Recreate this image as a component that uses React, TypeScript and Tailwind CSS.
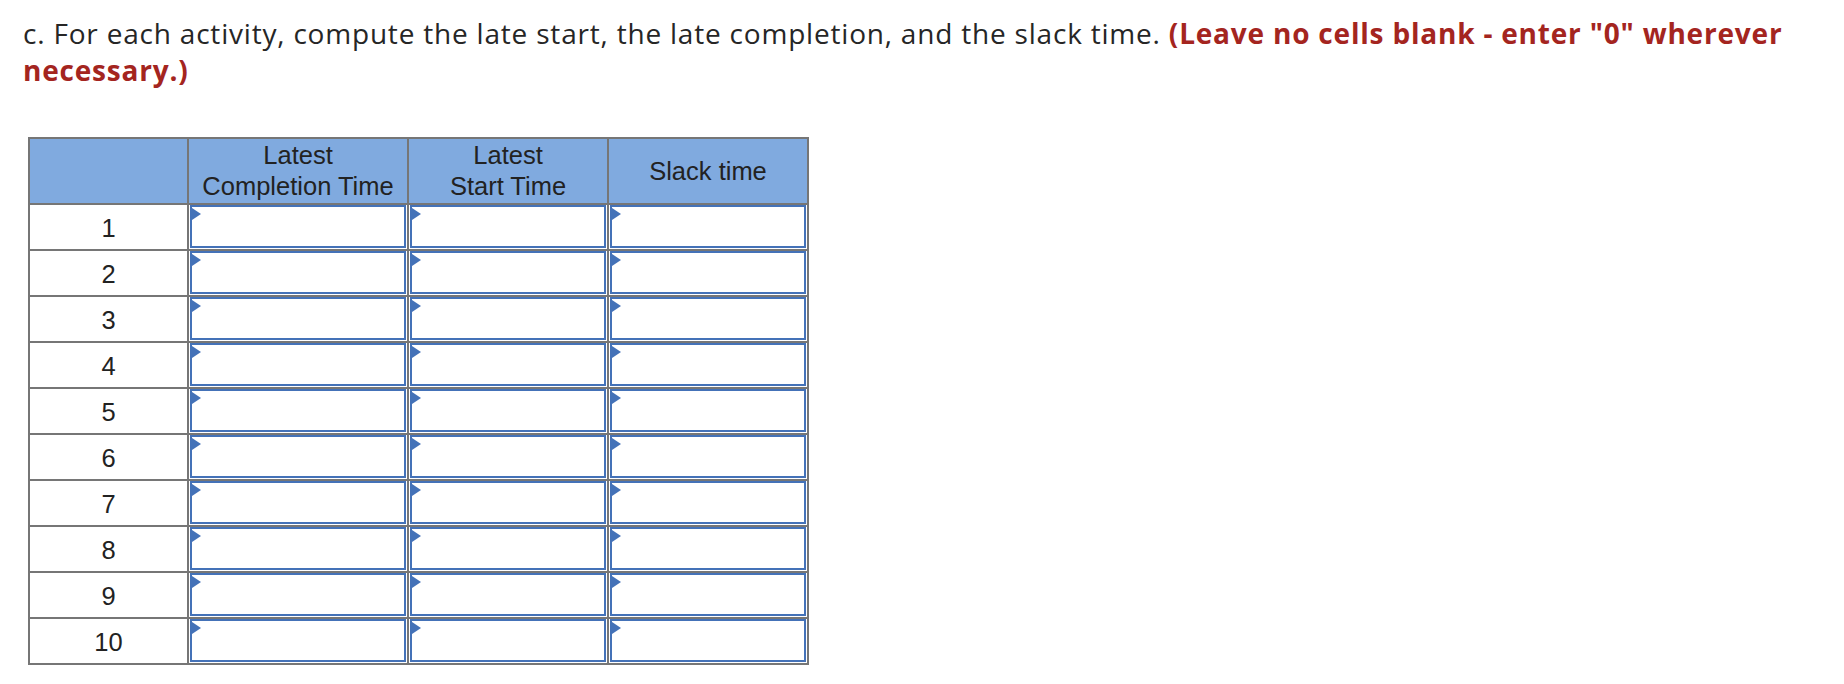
const rows = [1, 2, 3, 4, 5, 6, 7, 8, 9, 10];

const InputCell = () => (
  <td className="border-2 border-[#767676] px-px pb-px pt-0 align-top">
    <div className="relative h-[43px]">
      <input
        type="text"
        className="block w-full h-full border-2 border-[#4472b8] bg-white outline-none"
      />
      {/* little marker triangle in the top-left corner */}
      <span className="absolute left-[2px] top-[3px] w-0 h-0 border-y-[6px] border-y-transparent border-l-[9px] border-l-[#4472b8]" />
    </div>
  </td>
);

export default function App() {
  return (
    <div className="w-[1844px] h-[684px] bg-white">
      <p className="pl-[23px] pr-[40px] pt-[15px] text-[28px] leading-[37px] tracking-[0.8px] text-[#262626] font-['Open_Sans',sans-serif]">
        c. For each activity, compute the late start, the late completion, and the slack time.{" "}
        <span className="font-bold text-[#a4251f]">
          (Leave no cells blank - enter "0" wherever necessary.)
        </span>
      </p>

      <table className="ml-[28px] mt-[48px] border-collapse table-fixed w-[779px] text-[25.5px] text-[#222] font-['Liberation_Sans',Arial,sans-serif]">
        <colgroup>
          <col className="w-[159px]" />
          <col className="w-[220px]" />
          <col className="w-[200px]" />
          <col className="w-[200px]" />
        </colgroup>
        <thead>
          <tr className="h-[66px] bg-[#80aadf]">
            <th className="border-2 border-[#767676] font-normal" />
            <th className="border-2 border-[#767676] font-normal leading-[31px]">
              Latest
              <br />
              Completion Time
            </th>
            <th className="border-2 border-[#767676] font-normal leading-[31px]">
              Latest
              <br />
              Start Time
            </th>
            <th className="border-2 border-[#767676] font-normal leading-[31px]">
              Slack time
            </th>
          </tr>
        </thead>
        <tbody>
          {rows.map((n) => (
            <tr key={n} className="h-[46px]">
              <td className="border-2 border-[#767676] text-center leading-none pt-[4px]">{n}</td>
              <InputCell />
              <InputCell />
              <InputCell />
            </tr>
          ))}
        </tbody>
      </table>
    </div>
  );
}
